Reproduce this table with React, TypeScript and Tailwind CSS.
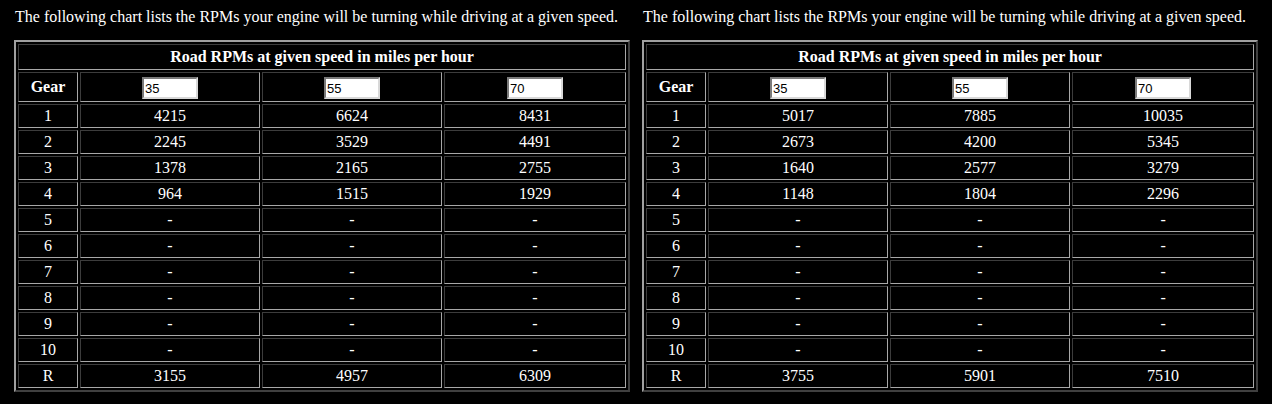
import React from "react";

type Chart = { speeds: string[]; rows: [string, string[]][] };

const dash = ["-", "-", "-"];

const charts: Chart[] = [
	{
		speeds: ["35", "55", "70"],
		rows: [
			["1", ["4215", "6624", "8431"]],
			["2", ["2245", "3529", "4491"]],
			["3", ["1378", "2165", "2755"]],
			["4", ["964", "1515", "1929"]],
			["5", dash],
			["6", dash],
			["7", dash],
			["8", dash],
			["9", dash],
			["10", dash],
			["R", ["3155", "4957", "6309"]],
		],
	},
	{
		speeds: ["35", "55", "70"],
		rows: [
			["1", ["5017", "7885", "10035"]],
			["2", ["2673", "4200", "5345"]],
			["3", ["1640", "2577", "3279"]],
			["4", ["1148", "1804", "2296"]],
			["5", dash],
			["6", dash],
			["7", dash],
			["8", dash],
			["9", dash],
			["10", dash],
			["R", ["3755", "5901", "7510"]],
		],
	},
];

// inset cell border like an old border=1 table
const cell =
	"border border-t-[#3c3c3c] border-l-[#3c3c3c] border-b-[#a8a8a8] border-r-[#a8a8a8] p-0 text-center align-middle";

function RpmTable({ chart }: { chart: Chart }) {
	return (
		<div className="flex flex-col">
			<p className="h-[18px] leading-[18px] whitespace-nowrap pl-[1px]">
				The following chart lists the RPMs your engine will be turning while driving at a given speed.
			</p>
			<table className="mt-[14px] w-[616px] table-fixed border-separate border-spacing-[2px] border-2 border-t-[#a0a0a0] border-l-[#a0a0a0] border-b-[#404040] border-r-[#404040]">
				<colgroup>
					<col className="w-[60px]" />
					<col className="w-[180px]" />
					<col className="w-[180px]" />
					<col className="w-[182px]" />
				</colgroup>
				<tbody>
					<tr>
						<th colSpan={4} className={`${cell} leading-[24px] font-bold`}>
							Road RPMs at given speed in miles per hour
						</th>
					</tr>
					<tr>
						<th className={`${cell} leading-[28px] font-bold`}>Gear</th>
						{chart.speeds.map((s, i) => (
							<td key={i} className={`${cell} leading-[28px]`}>
								<input
									defaultValue={s}
									className="w-[56px] h-[22px] bg-white text-black text-[13px] leading-[18px] px-[1px] border-2 border-t-[#7a7a7a] border-l-[#7a7a7a] border-b-[#d8d8d8] border-r-[#d8d8d8] font-['Liberation_Sans',Arial,sans-serif] outline-none align-middle"
								/>
							</td>
						))}
					</tr>
					{chart.rows.map(([gear, vals]) => (
						<tr key={gear}>
							<td className={`${cell} leading-[22px]`}>{gear}</td>
							{vals.map((v, i) => (
								<td key={i} className={`${cell} leading-[22px]`}>
									{v}
								</td>
							))}
						</tr>
					))}
				</tbody>
			</table>
		</div>
	);
}

export default function App() {
	return (
		<div className="min-h-[404px] bg-black text-white text-[16px] font-['Liberation_Serif','Times_New_Roman',serif] pt-[8px] pl-[14px]">
			<div className="flex gap-[12px]">
				{charts.map((c, i) => (
					<RpmTable key={i} chart={c} />
				))}
			</div>
		</div>
	);
}
